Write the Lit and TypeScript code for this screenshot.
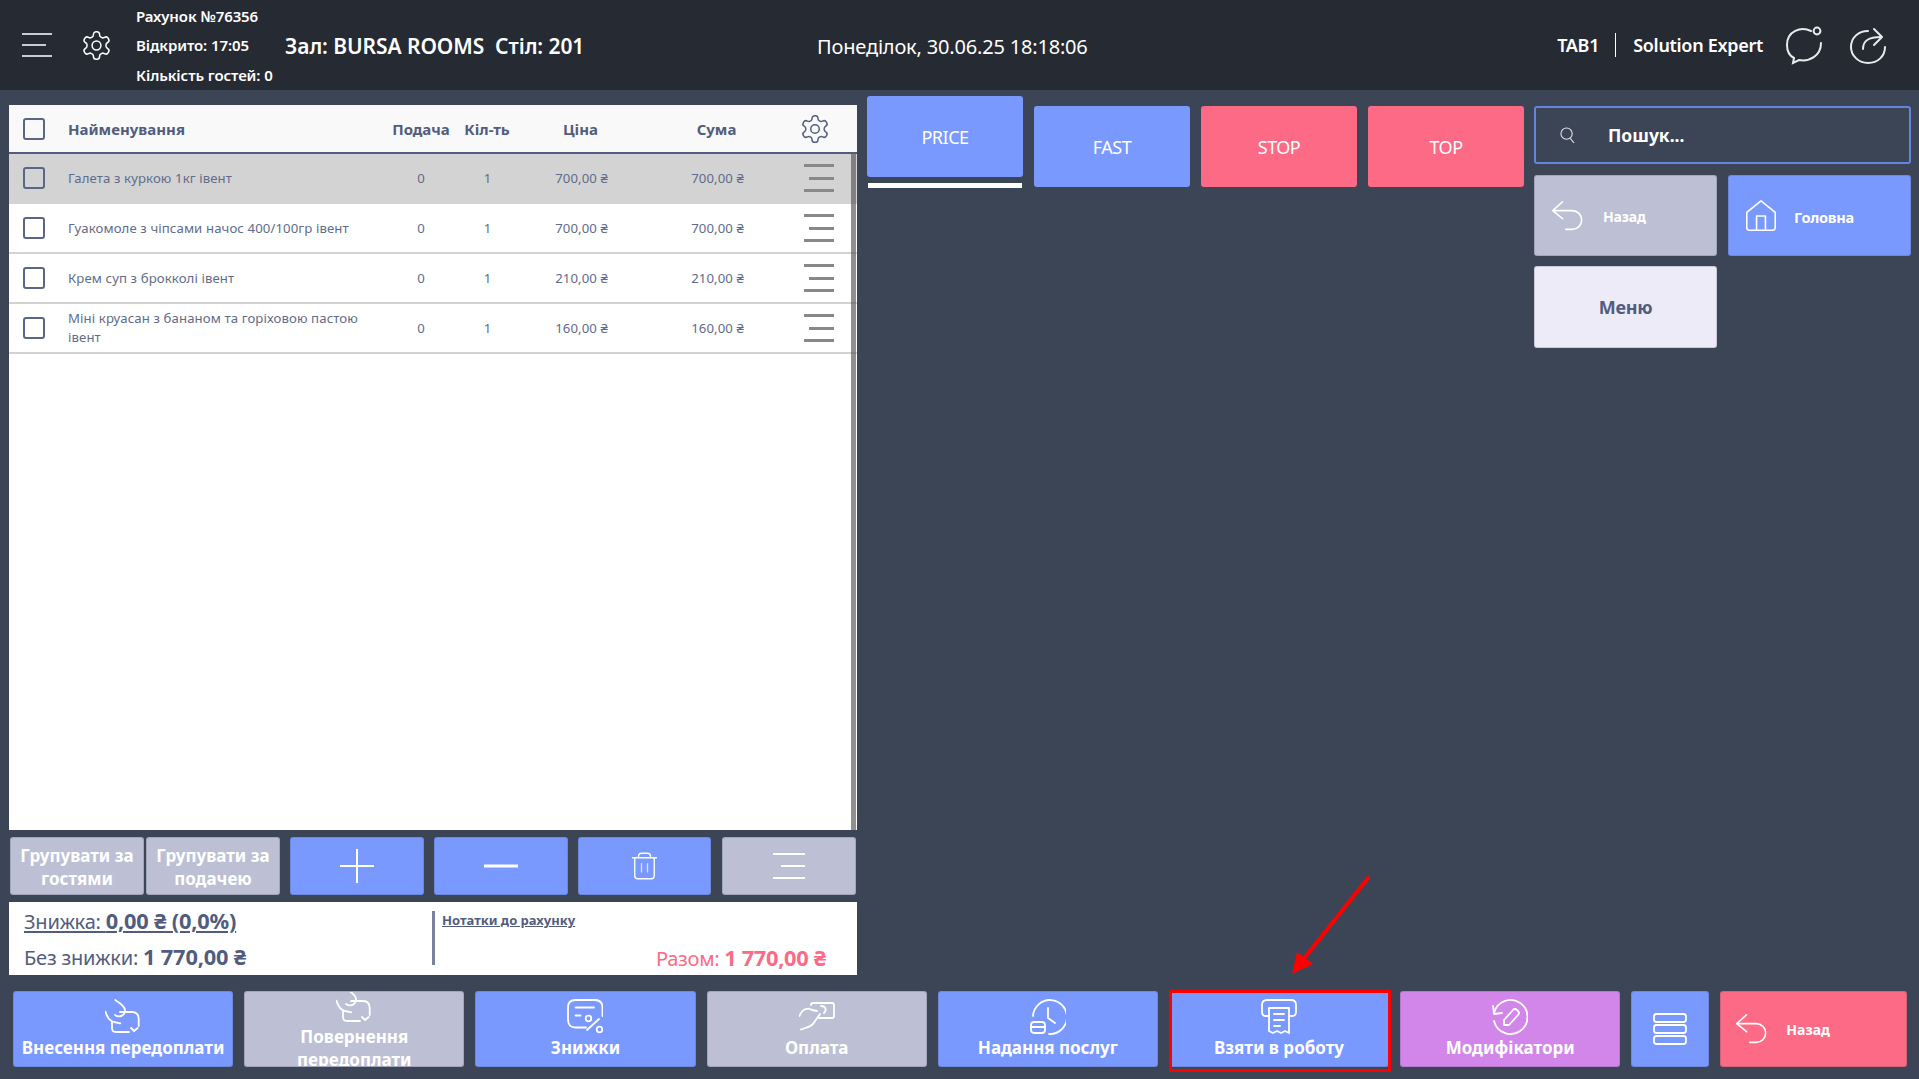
import { LitElement, html, css, svg } from "lit";
import { customElement } from "lit/decorators.js";

const gear = html`<svg viewBox="0 0 24 24" fill="none" stroke="currentColor" stroke-width="1.1" stroke-linejoin="round">
  <path d="M12.22 2h-.44a2 2 0 0 0-2 2v.18a2 2 0 0 1-1 1.73l-.43.25a2 2 0 0 1-2 0l-.15-.08a2 2 0 0 0-2.73.73l-.22.38a2 2 0 0 0 .73 2.73l.15.1a2 2 0 0 1 1 1.72v.51a2 2 0 0 1-1 1.74l-.15.09a2 2 0 0 0-.73 2.73l.22.38a2 2 0 0 0 2.73.73l.15-.08a2 2 0 0 1 2 0l.43.25a2 2 0 0 1 1 1.73V20a2 2 0 0 0 2 2h.44a2 2 0 0 0 2-2v-.18a2 2 0 0 1 1-1.73l.43-.25a2 2 0 0 1 2 0l.15.08a2 2 0 0 0 2.73-.73l.22-.39a2 2 0 0 0-.73-2.73l-.15-.08a2 2 0 0 1-1-1.74v-.5a2 2 0 0 1 1-1.74l.15-.09a2 2 0 0 0 .73-2.73l-.22-.38a2 2 0 0 0-2.73-.73l-.15.08a2 2 0 0 1-2 0l-.43-.25a2 2 0 0 1-1-1.73V4a2 2 0 0 0-2-2z"/>
  <circle cx="12" cy="12" r="3.2"/>
</svg>`;

const icon = (body: unknown, w = 36, h = 36) =>
  html`<svg class="ico" width=${w} height=${h} viewBox="0 0 36 36" fill="none" stroke="currentColor" stroke-width="1.8" stroke-linecap="round" stroke-linejoin="round">${body}</svg>`;

const back = svg`<path d="M13 2 L2 12 L13 21"/><path d="M2 12 H24 A10.5 10.5 0 0 1 24 33 H16" stroke-linecap="butt"/>`;
const prepay = svg`
  <path d="M10.3 1 C15 4 20 7 20 11 C20 17 14 19 10 16"/>
  <path d="M0.5 12.7 C2 18 5 22 9 23 L15.3 24.3"/>
  <path d="M15 13 H27 Q33.5 13 33.7 20 V27"/>
  <path d="M7 22.7 V29 Q7 33 11 33 H24"/>
  <path d="M26 29 L29 32 L32.7 29"/>`;
const discount = svg`
  <path d="M35.5 17 V8.5 Q35.5 1 27.5 1 H8.5 Q1 1 1 8.5 V20.5 Q1 28.5 8.5 28.5 H19"/>
  <path d="M8.5 8.5 H27"/><path d="M8.5 16.5 H13.5"/>
  <circle cx="21.5" cy="19.5" r="2.8"/><circle cx="32.5" cy="30.5" r="2.8"/><path d="M32 20 L20 31"/>`;
const payment = svg`
  <path d="M12 6 Q12 4 14 4 H33 Q35 4 35 6 V17 Q35 19 33 19 H20"/>
  <path d="M0.5 17 C3 10 9 8 13 11 L18 12"/>
  <path d="M21 15 L14 25 C11 28 6 29 2 30.5"/>
  <path d="M22 7 C27 7 28 11 25 14"/>`;
const service = svg`
  <path d="M3 17 A17 17 0 1 1 19 35"/>
  <path d="M18 9 V19 L25 24"/>
  <rect x="1" y="23" width="14" height="11" rx="3"/><path d="M1 28 H15"/>`;
const receipt = svg`
  <path d="M8 17 H5 Q1 17 1 13 V6 Q1 1 6 1 H30 Q35 1 35 6 V13 Q35 17 31 17 H28"/>
  <path d="M8 9 H28 V34 L24 32 L20 34 L16 32 L12 34 L8 32 Z"/>
  <path d="M13 15 H23"/><path d="M13 21 H23"/><path d="M13 27 H19"/>`;
const modifier = svg`
  <path d="M2 14 A17 17 0 1 1 2 22"/>
  <path d="M1 7 L2 15 L10 14"/>
  <path d="M12 21 L21 11 Q23 9 25 11 L26 12 Q28 14 26 16 L17 26 H12 Z"/>`;
const stack = svg`
  <rect x="2" y="3" width="32" height="8" rx="2.5"/>
  <rect x="2" y="14" width="32" height="8" rx="2.5"/>
  <rect x="2" y="25" width="32" height="8" rx="2.5"/>`;
const home = svg`<path d="M2 14 L18 1 L34 14 V31 Q34 34 31 34 H5 Q2 34 2 31 Z"/><path d="M13 34 V18 H23 V34"/>`;
const trash = svg`
  <path d="M2 7 H34"/><path d="M10 7 V5 Q10 1 14 1 H22 Q26 1 26 5 V7"/>
  <path d="M5 7 V31 Q5 35 9 35 H27 Q31 35 31 31 V7"/>
  <path d="M14 15 V26" opacity=".7"/><path d="M22 15 V26" opacity=".7"/>`;

type Row = { name: string; price: string; on?: boolean };
const rows: Row[] = [
  { name: "Галета з куркою 1кг івент", price: "700,00 ₴", on: true },
  { name: "Гуакомоле з чіпсами начос 400/100гр івент", price: "700,00 ₴" },
  { name: "Крем суп з брокколі івент", price: "210,00 ₴" },
  { name: "Міні круасан з бананом та горіховою пастою івент", price: "160,00 ₴" },
];

type Action = { label: string; icon: unknown; color: string };
const actions: Action[] = [
  { label: "Внесення передоплати", icon: prepay, color: "blue" },
  { label: "Повернення передоплати", icon: prepay, color: "gray" },
  { label: "Знижки", icon: discount, color: "blue" },
  { label: "Оплата", icon: payment, color: "gray" },
  { label: "Надання послуг", icon: service, color: "blue" },
  { label: "Взяти в роботу", icon: receipt, color: "blue" },
  { label: "Модифікатори", icon: modifier, color: "violet" },
];

@customElement("app-root")
export class AppRoot extends LitElement {
  static styles = css`
    :host {
      display: block;
      width: 1919px;
      height: 1079px;
      font-family: "Noto Sans", "Open Sans", sans-serif;
      color: #fff;
    }
    * { box-sizing: border-box; }
    .page {
      position: relative;
      width: 100%;
      height: 100%;
      display: flex;
      flex-direction: column;
      background: #3c4556;
      overflow: hidden;
    }

    /* header */
    .top {
      flex: 0 0 90px;
      min-height: 0;
      background: #262a33;
      display: flex;
      align-items: center;
      position: relative;
    }
    .burger {
      margin-left: 22px;
      width: 30px;
      height: 24px;
      display: flex;
      flex-direction: column;
      justify-content: space-between;
    }
    .burger i { display: block; height: 2px; background: #c9ccd6; }
    .burger i:nth-child(2) { margin-right: 6px; }
    .top-gear { margin-left: 28px; width: 33px; height: 33px; color: #fff; }
    .bill {
      margin-left: 23px;
      padding-top: 2px;
      width: 149px;
      font-size: 15px;
      font-weight: 600;
      line-height: 29.5px;
      letter-spacing: -0.1px;
      white-space: nowrap;
    }
    .hall {
      margin-top: 2px;
      font-size: 21px;
      font-weight: 600;
      white-space: pre;
      letter-spacing: -0.07px;
    }
    .date {
      position: absolute;
      left: 817px;
      top: 32px;
      font-size: 20px;
      line-height: 30px;
      letter-spacing: -0.18px;
      white-space: nowrap;
    }
    .user {
      margin-left: auto;
      display: flex;
      align-items: center;
      font-size: 18px;
      font-weight: 600;
      letter-spacing: -0.3px;
    }
    .user .sep { width: 1px; height: 24px; background: #fff; margin: 0 17px 0 16px; }
    .user svg { margin-left: 22px; }
    .user svg + svg { margin-left: 26px; margin-right: 32px; }

    /* middle */
    .mid { flex: 1; display: flex; min-height: 0; padding-left: 9px; }
    .left {
      width: 848px;
      display: flex;
      flex-direction: column;
      padding-top: 15px;
    }
    .table {
      flex: 1;
      display: flex;
      flex-direction: column;
      background: #fff;
      position: relative;
      color: #525d7e;
    }
    .thead {
      height: 49px;
      flex: none;
      background: #f9f9f9;
      border-bottom: 2px solid #525d7e;
      font-size: 15px;
      font-weight: 700;
      display: grid;
      grid-template-columns: 59px 320px 66px 66px 121px 151px 1fr;
      align-items: center;
    }
    .row {
      height: 50px;
      display: grid;
      grid-template-columns: 59px 320px 66px 67px 121px 151px 1fr;
      align-items: center;
      border-bottom: 2px solid #d3d3d3;
      color: #626c8a;
      font-size: 13.2px;
      line-height: 19px;
      letter-spacing: 0.1px;
    }
    .row.on { background: #d3d3d3; }
    .c { text-align: center; }
    .box {
      margin-left: 14px;
      width: 22px;
      height: 22px;
      border: 2px solid #5a6688;
      border-radius: 3px;
    }
    .thead-gear { width: 32px; height: 32px; margin-left: 7px; color: #525d7e; }
    .lines {
      margin-left: 11px;
      width: 30px;
      height: 28px;
      display: flex;
      flex-direction: column;
      justify-content: space-between;
      align-items: flex-end;
    }
    .lines i { display: block; width: 30px; height: 3px; background: #888; }
    .lines i:nth-child(2) { width: 25px; }
    .scroll {
      position: absolute;
      right: 1px;
      top: 49px;
      bottom: 0;
      width: 5px;
      background: rgba(85, 85, 85, 0.65);
    }

    .tools { flex: none; display: flex; gap: 2px; margin-top: 7px; padding-left: 1px; }
    .btn {
      border-radius: 3px;
      border: 1px solid rgba(60, 69, 86, 0.2);
      display: flex;
      align-items: center;
      justify-content: center;
      color: #fff;
      overflow: hidden;
    }
    .blue { background: #7a99ff; }
    .gray { background: #bdbfd4; }
    .red { background: #fc6a85; }
    .violet { background: #d286ea; }
    .tool { height: 58px; width: 134px; }
    .tool.txt { font-size: 17px; font-weight: 700; line-height: 23px; text-align: center; padding-top: 2px; }
    .tool.sp { margin-left: 8px; width: 133.5px; }
    .tool.sp2 { margin-left: 8px; }
    .tool.first { margin-left: 8px; }
    .tool.trash { padding-right: 0; width: 133.5px; }
    .tool.last { margin-left: 9px; width: 133.5px; }

    .info {
      flex: none;
      height: 73px;
      margin-top: 7px;
      background: #fff;
      color: #525d7e;
      position: relative;
      display: grid;
      grid-template-columns: 408px 1fr;
      padding: 0 0 0 15px;
      font-size: 20px;
    }
    .info b { font-weight: 700; font-size: 21.8px; }
    .sums { display: flex; flex-direction: column; padding-top: 4px; line-height: 30px; gap: 5px; letter-spacing: -0.2px; }
    .sums u { text-underline-offset: 2px; }
    .notes {
      margin: 9px 0 10px;
      border-left: 3px solid #7b829d;
      padding-left: 7px;
      font-size: 13px;
      font-weight: 700;
      line-height: 19px;
      text-decoration: underline;
    }
    .total {
      position: absolute;
      right: 31px;
      bottom: 1px;
      line-height: 30px;
      color: #fc6a85;
      letter-spacing: -0.3px;
    }

    .right { display: flex; padding-left: 10px; align-items: flex-start; }
    .tabs { width: 657px; display: flex; gap: 11px; }
    .tab {
      width: 156px;
      height: 81px;
      margin-top: 16px;
      border-radius: 3px;
      display: flex;
      align-items: center;
      justify-content: center;
      font-size: 18px;
      letter-spacing: -0.5px;
      font-weight: 400;
      padding-top: 1px;
    }
    .tab.sel { margin-top: 6px; position: relative; }
    .tab.sel::after {
      content: "";
      position: absolute;
      left: 1px;
      right: 1px;
      top: 87px;
      height: 5px;
      background: #fff;
    }
    .side {
      width: 376.5px;
      margin-left: 10px;
      padding-top: 16px;
      display: grid;
      grid-template-columns: 183px 182.5px;
      column-gap: 11px;
      row-gap: 11px;
    }
    .search {
      grid-column: 1 / 3;
      height: 58px;
      border: 2px solid #6384e0;
      border-radius: 3px;
      display: flex;
      align-items: center;
      font-size: 17.5px;
      font-weight: 700;
    }
    .search svg { margin-left: 23.5px; margin-right: 33.5px; color: #dfe1e8; }
    .nav {
      height: 81px;
      justify-content: flex-start;
      font-size: 14px;
      font-weight: 700;
      padding-left: 16px;
      gap: 20px;
      letter-spacing: -0.2px;
    }
    .nav span { padding-top: 2px; }
    .nav.homebtn { gap: 17px; font-size: 14.5px; }
    .menu {
      height: 82px;
      margin-top: -1px;
      background: #edebf8;
      color: #525d7e;
      justify-content: center;
      font-size: 18px;
      font-weight: 700;
      border-radius: 3px;
      letter-spacing: -0.3px;
    }

    /* bottom */
    .bar { flex: 0 0 104px; display: flex; gap: 11px; padding: 16px 0 12px 13px; }
    .act {
      flex: 0 0 220.2px;
      height: 76px;
      flex-direction: column;
      justify-content: center;
      font-size: 17px;
      font-weight: 700;
      line-height: 23px;
      text-align: center;
    }
    .act .ico { flex: none; margin-bottom: 1px; }
    .act span { display: block; padding: 0 6px; }
    .stack { flex: 0 0 78px; height: 76px; }
    .out {
      flex: 0 0 187px;
      height: 76px;
      justify-content: flex-start;
      padding-left: 14px;
      gap: 19px;
      font-size: 14px;
      font-weight: 700;
    }

    /* annotation drawn over the shot */
    .mark { position: absolute; left: 0; top: 0; pointer-events: none; }
  `;

  render() {
    return html`
      <div class="page">
        <header class="top">
          <div class="burger"><i></i><i></i><i></i></div>
          <div class="top-gear">${gear}</div>
          <div class="bill">
            <div>Рахунок №76356</div>
            <div>Відкрито: 17:05</div>
            <div>Кількість гостей: 0</div>
          </div>
          <div class="hall">Зал: BURSA ROOMS  Стіл: 201</div>
          <div class="date">Понеділок, 30.06.25 18:18:06</div>
          <div class="user">
            <span>TAB1</span><span class="sep"></span><span>Solution Expert</span>
            <svg width="38" height="40" viewBox="0 0 38 40" fill="none" stroke="#e9eaee" stroke-width="2" stroke-linecap="round">
              <path d="M26 6 C16 1 2 6 2 20 C2 27 5 31 9 33 L8 38 L14 35 C24 37 36 31 36 18"/>
              <circle cx="32" cy="6" r="3.4"/>
            </svg>
            <svg width="38" height="40" viewBox="0 0 38 40" fill="none" stroke="#e9eaee" stroke-width="2" stroke-linecap="round" stroke-linejoin="round">
              <path d="M19 6 C9 6 2 13 2 22 C2 31 10 38 19 38 C29 38 36 31 36 22"/>
              <path d="M14 24 C14 16 19 12 32 12"/>
              <path d="M25 4 L33 12 L25 20"/>
            </svg>
          </div>
        </header>

        <div class="mid">
          <section class="left">
            <div class="table">
              <div class="thead">
                <div class="box"></div>
                <div>Найменування</div>
                <div class="c">Подача</div>
                <div class="c">Кіл-ть</div>
                <div class="c">Ціна</div>
                <div class="c">Сума</div>
                <div class="thead-gear">${gear}</div>
              </div>
              ${rows.map(
                (r) => html`
                  <div class="row ${r.on ? "on" : ""}">
                    <div class="box"></div>
                    <div>${r.name}</div>
                    <div class="c">0</div>
                    <div class="c">1</div>
                    <div class="c">${r.price}</div>
                    <div class="c">${r.price}</div>
                    <div class="lines"><i></i><i></i><i></i></div>
                  </div>
                `
              )}
              <div class="scroll"></div>
            </div>

            <div class="tools">
              <div class="btn gray tool txt">Групувати за гостями</div>
              <div class="btn gray tool txt">Групувати за подачею</div>
              <div class="btn blue tool sp">
                <svg width="36" height="36" viewBox="0 0 36 36" stroke="#fff" stroke-width="2"><path d="M18 1 V35 M1 18 H35"/></svg>
              </div>
              <div class="btn blue tool first">
                <svg width="36" height="36" viewBox="0 0 36 36" stroke="#fff" stroke-width="3"><path d="M1 18 H35"/></svg>
              </div>
              <div class="btn blue tool sp2 trash">${icon(trash, 27, 30)}</div>
              <div class="btn gray tool last">
                <svg width="32" height="26" viewBox="0 0 32 26" stroke="#fff" stroke-width="2"><path d="M0 1 H32 M8 13 H32 M0 25 H32"/></svg>
              </div>
            </div>

            <div class="info">
              <div class="sums">
                <u>Знижка: <b>0,00 ₴ (0,0%)</b></u>
                <div>Без знижки: <b>1 770,00 ₴</b></div>
              </div>
              <div class="notes">Нотатки до рахунку</div>
              <div class="total">Разом: <b>1 770,00 ₴</b></div>
            </div>
          </section>

          <section class="right">
            <div class="tabs">
              <div class="tab blue sel">PRICE</div>
              <div class="tab blue">FAST</div>
              <div class="tab red">STOP</div>
              <div class="tab red">TOP</div>
            </div>
            <div class="side">
              <div class="search">
                <svg width="15" height="17" viewBox="0 0 16 18" fill="none" stroke="currentColor" stroke-width="1.2"><circle cx="7" cy="7" r="6"/><path d="M11 12 L15 17"/></svg>
                <span>Пошук...</span>
              </div>
              <div class="btn gray nav">${icon(back, 32, 32)}<span>Назад</span></div>
              <div class="btn blue nav homebtn">${icon(home, 32, 32)}<span>Головна</span></div>
              <div class="btn menu">Меню</div>
            </div>
          </section>
        </div>

        <footer class="bar">
          ${actions.map(
            (a) => html`<div class="btn act ${a.color}">${icon(a.icon)}<span>${a.label}</span></div>`
          )}
          <div class="btn blue stack">${icon(stack)}</div>
          <div class="btn red out">${icon(back, 32, 32)}<span>Назад</span></div>
        </footer>

        <svg class="mark" width="1919" height="1079" viewBox="0 0 1919 1079" fill="none">
          <rect x="1170.5" y="991.5" width="219" height="79" stroke="#f00" stroke-width="3"/>
          <path d="M1368 878 L1302 961" stroke="#f00" stroke-width="4" stroke-linecap="round"/>
          <path d="M1292 974 L1297 952 L1313 964 Z" fill="#f00"/>
        </svg>
      </div>
    `;
  }
}
